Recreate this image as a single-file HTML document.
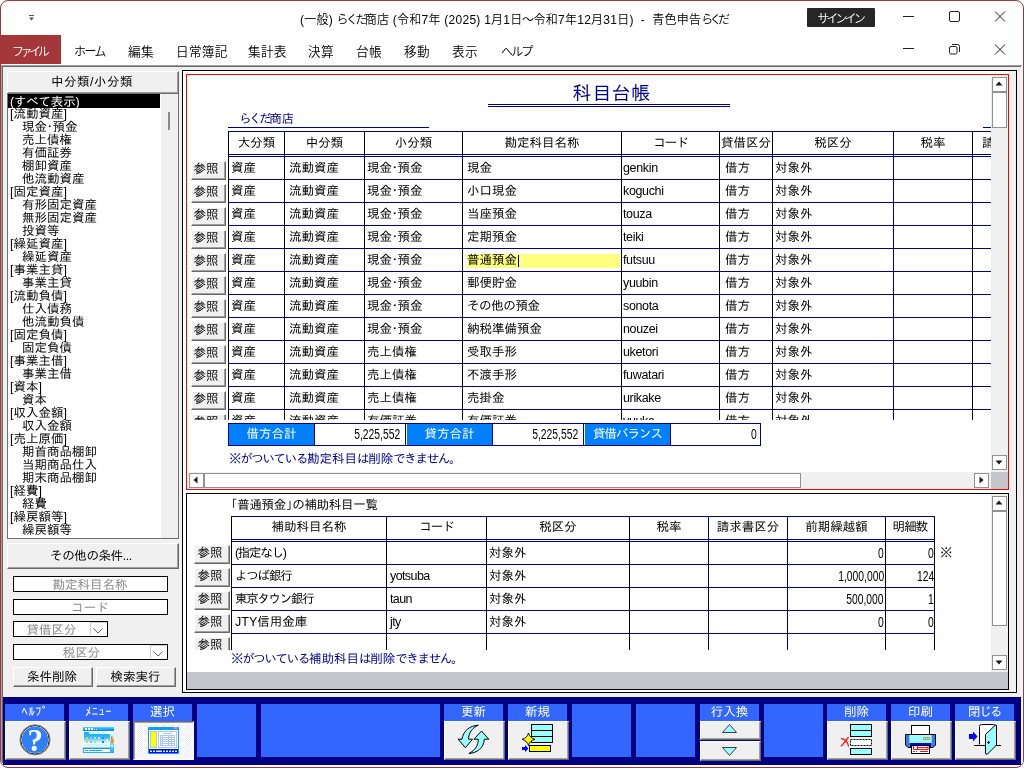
<!DOCTYPE html>
<html lang="ja"><head><meta charset="utf-8"><title>科目台帳 - 青色申告らくだ</title>
<style>
html,body{margin:0;padding:0;background:#fff;}
body{width:1024px;height:768px;position:relative;overflow:hidden;will-change:transform;font-family:"Liberation Sans","IPAGothic",sans-serif;font-size:12px;color:#000;}
body div{position:absolute;box-sizing:content-box;}
.t{white-space:nowrap;line-height:12px;height:12px;font-size:12.5px;}
.u{white-space:nowrap;line-height:16px;height:16px;font-size:12px;font-family:"Liberation Sans","Noto Sans CJK JP",sans-serif;color:#000;font-weight:350;}
.b3{background:#f0f0f0;border-top:1px solid #fff;border-left:1px solid #fff;border-right:1px solid #696969;border-bottom:1px solid #696969;box-shadow:inset -1px -1px 0 #a0a0a0;}
.sb{background:#fff;border:1px solid #919191;}
.nv{color:#000080;}
svg{position:absolute;overflow:visible;}
.clip{overflow:hidden;}
.md{margin:0 -3.5px;}
.k{letter-spacing:-1.35px;}
.num{font-size:14px;line-height:14px;height:14px;transform:scaleX(.74);transform-origin:100% 50%;}
</style></head><body>

<div style="left:0px;top:0px;width:1022px;height:766px;border:1px solid #a4373a;border-radius:8px;background:#fff;"></div>
<svg style="left:28px;top:14px" width="9" height="9"><rect x="1" y="1" width="5" height="1" fill="#555"/><path d="M1 3.500h5l-2.500 3z" fill="#555"/></svg>
<div class="u" style="left:300px;top:12px;letter-spacing:0.25px;">(一般) <span style="letter-spacing:-2.6px">らくだ</span>商店 (令和7年 (2025) 1月1日<span style="margin:0 -0.6px">～</span>令和7年12月31日)&nbsp; -&nbsp; 青色申告<span style="letter-spacing:-3.6px">らくだ</span></div>
<div style="left:807px;top:8px;width:68px;height:19px;background:#262626;border-radius:1px;"></div>
<div class="u" style="left:806px;top:11px;width:68px;text-align:center;color:#fff;letter-spacing:-2.9px;">サインイン</div>
<svg style="left:900px;top:8px" width="112" height="18" fill="none" stroke="#222" stroke-width="1"><path d="M3 8.5h11"/><rect x="49.5" y="3.5" width="10" height="10" rx="1.5"/><path d="M95 3.5l10 10M105 3.5l-10 10"/></svg>
<svg style="left:900px;top:40px" width="112" height="18" fill="none" stroke="#222" stroke-width="1"><path d="M3 8.5h11"/><rect x="49.5" y="6.5" width="7.5" height="7.5" rx="1.5"/><path d="M52 4.5h5.5a2 2 0 0 1 2 2V12"/><path d="M95 4.5l10 10M105 4.5l-10 10"/></svg>
<div style="left:1px;top:35px;width:60px;height:29px;background:#a4373a;"></div>
<div class="u" style="left:12px;top:44px;color:#fff;letter-spacing:-3.4px;">ファイル</div>
<div class="u" style="left:74px;top:44px;letter-spacing:-1.6px;">ホーム</div>
<div class="u" style="left:128px;top:44px;letter-spacing:0.3px;font-size:12.6px;">編集</div>
<div class="u" style="left:176px;top:44px;letter-spacing:0.3px;font-size:12.6px;">日常簿記</div>
<div class="u" style="left:248px;top:44px;letter-spacing:0.3px;font-size:12.6px;">集計表</div>
<div class="u" style="left:308px;top:44px;letter-spacing:0.3px;font-size:12.6px;">決算</div>
<div class="u" style="left:356px;top:44px;letter-spacing:0.3px;font-size:12.6px;">台帳</div>
<div class="u" style="left:404px;top:44px;letter-spacing:0.3px;font-size:12.6px;">移動</div>
<div class="u" style="left:452px;top:44px;letter-spacing:0.3px;font-size:12.6px;">表示</div>
<div class="u" style="left:501px;top:44px;letter-spacing:-1.8px;">ヘルプ</div>
<div style="left:1px;top:65px;width:1021px;height:632px;background:#f0f0f0;"></div>
<div style="left:1px;top:65px;width:1021px;height:1px;background:#a0a0a0"></div>
<div style="left:2px;top:66px;width:1020px;height:1px;background:#696969"></div>
<div style="left:1px;top:65px;width:1px;height:697px;background:#a0a0a0"></div>
<div style="left:2px;top:66px;width:1px;height:697px;background:#696969"></div>
<div style="left:1022px;top:65px;width:1px;height:698px;background:#fff"></div>
<div style="left:1021px;top:66px;width:1px;height:698px;background:#f4f4f4"></div>
<div class="b3" style="left:7px;top:71px;width:170px;height:21px;"></div>
<div class="t" style="left:6px;top:76px;width:172px;text-align:center;letter-spacing:0.5px;">中分類/小分類</div>
<div style="left:7px;top:93px;width:170px;height:444px;border:1px solid #6e6e6e;background:#fff;"></div>
<div style="left:161px;top:94px;width:17px;height:444px;background:#f0f0f0;"></div>
<div style="left:168px;top:112px;width:2px;height:18px;background:#8a8a8a;"></div>
<div style="left:8px;top:94px;width:152px;height:14px;background:#000;"></div>
<div class="t" style="left:10px;top:96px;color:#fff;letter-spacing:-0.2px;">(すべて表示)</div>
<div class="t" style="left:10px;top:108px;">[流動資産]</div>
<div class="t" style="left:22px;top:121px;">現金<span class="md">・</span>預金</div>
<div class="t" style="left:22px;top:134px;">売上債権</div>
<div class="t" style="left:22px;top:147px;">有価証券</div>
<div class="t" style="left:22px;top:160px;">棚卸資産</div>
<div class="t" style="left:22px;top:173px;">他流動資産</div>
<div class="t" style="left:10px;top:186px;">[固定資産]</div>
<div class="t" style="left:22px;top:199px;">有形固定資産</div>
<div class="t" style="left:22px;top:212px;">無形固定資産</div>
<div class="t" style="left:22px;top:225px;">投資等</div>
<div class="t" style="left:10px;top:238px;">[繰延資産]</div>
<div class="t" style="left:22px;top:251px;">繰延資産</div>
<div class="t" style="left:10px;top:264px;">[事業主貸]</div>
<div class="t" style="left:22px;top:277px;">事業主貸</div>
<div class="t" style="left:10px;top:290px;">[流動負債]</div>
<div class="t" style="left:22px;top:303px;">仕入債務</div>
<div class="t" style="left:22px;top:316px;">他流動負債</div>
<div class="t" style="left:10px;top:329px;">[固定負債]</div>
<div class="t" style="left:22px;top:342px;">固定負債</div>
<div class="t" style="left:10px;top:355px;">[事業主借]</div>
<div class="t" style="left:22px;top:368px;">事業主借</div>
<div class="t" style="left:10px;top:381px;">[資本]</div>
<div class="t" style="left:22px;top:394px;">資本</div>
<div class="t" style="left:10px;top:407px;">[収入金額]</div>
<div class="t" style="left:22px;top:420px;">収入金額</div>
<div class="t" style="left:10px;top:433px;">[売上原価]</div>
<div class="t" style="left:22px;top:446px;">期首商品棚卸</div>
<div class="t" style="left:22px;top:459px;">当期商品仕入</div>
<div class="t" style="left:22px;top:472px;">期末商品棚卸</div>
<div class="t" style="left:10px;top:485px;">[経費]</div>
<div class="t" style="left:22px;top:498px;">経費</div>
<div class="t" style="left:10px;top:511px;">[繰戻額等]</div>
<div class="t" style="left:22px;top:524px;">繰戻額等</div>
<div class="b3" style="left:7px;top:543px;width:170px;height:24px;"></div>
<div class="t" style="left:5px;top:550px;width:172px;text-align:center;letter-spacing:-0.4px;">その他の条件...</div>
<div style="left:13px;top:576px;width:153px;height:14px;border:1px solid #000;background:#fff;"></div>
<div class="t" style="left:13px;top:579px;width:154px;text-align:center;color:#8a8a8a;">勘定科目名称</div>
<div style="left:13px;top:599px;width:153px;height:14px;border:1px solid #000;background:#fff;"></div>
<div class="t" style="left:13px;top:602px;width:154px;text-align:center;color:#8a8a8a;">コード</div>
<div style="left:13px;top:621px;width:93px;height:14px;border:1px solid #000;background:#fff;"></div>
<div class="t" style="left:13px;top:624px;width:77px;text-align:center;color:#8a8a8a;">貸借区分</div>
<div style="left:90px;top:622px;width:16px;height:13px;background:#fdfdfd;border-left:1px solid #d0d0d0;border-top:1px solid #d0d0d0;width:15px;height:12px;"></div>
<svg style="left:93px;top:628px" width="11" height="6" fill="none" stroke="#666" stroke-width="1"><path d="M0.5 0.5l4.5 4.5l4.5-4.5"/></svg>
<div style="left:13px;top:644px;width:153px;height:14px;border:1px solid #000;background:#fff;"></div>
<div class="t" style="left:13px;top:647px;width:137px;text-align:center;color:#8a8a8a;">税区分</div>
<div style="left:150px;top:645px;width:16px;height:13px;background:#fdfdfd;border-left:1px solid #d0d0d0;border-top:1px solid #d0d0d0;width:15px;height:12px;"></div>
<svg style="left:153px;top:651px" width="11" height="6" fill="none" stroke="#666" stroke-width="1"><path d="M0.5 0.5l4.5 4.5l4.5-4.5"/></svg>
<div class="b3" style="left:13px;top:667px;width:78px;height:18px;"></div>
<div class="t" style="left:12px;top:671px;width:80px;text-align:center;">条件削除</div>
<div class="b3" style="left:96px;top:667px;width:78px;height:18px;"></div>
<div class="t" style="left:95px;top:671px;width:81px;text-align:center;">検索実行</div>
<div style="left:182px;top:70px;width:833px;height:621px;border:1px solid #000;background:#f0f0f0;"></div>
<div style="left:183px;top:71px;width:826px;height:621px;background:#fff;"></div>
<div style="left:186px;top:74px;width:821px;height:414px;border:1px solid #f00;background:#fff;"></div>
<div style="left:991px;top:75px;width:17px;height:397px;background:#f0f0f0;"></div>
<div class="sb" style="left:992px;top:77px;width:13px;height:13px;"></div><svg style="left:992px;top:77px" width="15" height="15"><path d="M3.5 8.5h7l-3.5-4z" fill="#1a1a1a"/></svg>
<div class="sb" style="left:992px;top:92px;width:13px;height:34px;"></div>
<div class="sb" style="left:992px;top:455px;width:13px;height:13px;"></div><svg style="left:992px;top:455px" width="15" height="15"><path d="M3.5 5.5h7l-3.5 4z" fill="#1a1a1a"/></svg>
<div style="left:187px;top:472px;width:804px;height:17px;background:#f0f0f0;"></div>
<div class="sb" style="left:189px;top:473px;width:13px;height:13px;"></div><svg style="left:189px;top:473px" width="15" height="15"><path d="M8.5 3.5v7l-4-3.5z" fill="#1a1a1a"/></svg>
<div class="sb" style="left:204px;top:473px;width:595px;height:13px;"></div>
<div class="sb" style="left:974px;top:473px;width:13px;height:13px;"></div><svg style="left:974px;top:473px" width="15" height="15"><path d="M5.5 3.5v7l4-3.5z" fill="#1a1a1a"/></svg>
<div style="left:991px;top:472px;width:17px;height:17px;background:#c3c7cb;"></div>
<div class="t" style="left:490px;top:84px;width:243px;text-align:center;font-size:19px;line-height:19px;height:19px;letter-spacing:0.7px;text-indent:0.7px;color:#000090;">科目台帳</div>
<div style="left:488px;top:104px;width:242px;height:1px;background:#000080"></div>
<div style="left:488px;top:106px;width:242px;height:1px;background:#000080"></div>
<div class="t" style="left:239px;top:113px;color:#000090;"><span style="letter-spacing:-2.4px">らくだ</span>商店</div>
<div style="left:228px;top:127px;width:201px;height:1px;background:#000080"></div>
<div style="left:983px;top:127px;width:8px;height:1px;background:#000080"></div>
<div class="clip" style="left:187px;top:75px;width:804px;height:345px;">
<div style="left:41px;top:56px;width:1px;height:300px;background:#000"></div>
<div style="left:97px;top:56px;width:1px;height:300px;background:#000"></div>
<div style="left:177px;top:56px;width:1px;height:300px;background:#000"></div>
<div style="left:275px;top:56px;width:1px;height:300px;background:#000"></div>
<div style="left:434px;top:56px;width:1px;height:300px;background:#000"></div>
<div style="left:532px;top:56px;width:1px;height:300px;background:#000"></div>
<div style="left:585px;top:56px;width:1px;height:300px;background:#000"></div>
<div style="left:706px;top:56px;width:1px;height:300px;background:#000080"></div>
<div style="left:785px;top:56px;width:1px;height:300px;background:#000"></div>
<div style="left:41px;top:56px;width:800px;height:1px;background:#000080"></div>
<div style="left:41px;top:79px;width:800px;height:1px;background:#000080"></div>
<div style="left:41px;top:81px;width:800px;height:1px;background:#000080"></div>
<div style="left:41px;top:104px;width:800px;height:1px;background:#000080"></div>
<div style="left:41px;top:127px;width:800px;height:1px;background:#000080"></div>
<div style="left:41px;top:150px;width:800px;height:1px;background:#000080"></div>
<div style="left:41px;top:173px;width:800px;height:1px;background:#000080"></div>
<div style="left:41px;top:196px;width:800px;height:1px;background:#000080"></div>
<div style="left:41px;top:219px;width:800px;height:1px;background:#000080"></div>
<div style="left:41px;top:242px;width:800px;height:1px;background:#000080"></div>
<div style="left:41px;top:265px;width:800px;height:1px;background:#000080"></div>
<div style="left:41px;top:288px;width:800px;height:1px;background:#000080"></div>
<div style="left:41px;top:311px;width:800px;height:1px;background:#000080"></div>
<div style="left:41px;top:334px;width:800px;height:1px;background:#000080"></div>
<div class="t" style="left:42px;top:62px;width:55px;text-align:center;">大分類</div>
<div class="t" style="left:98px;top:62px;width:79px;text-align:center;">中分類</div>
<div class="t" style="left:178px;top:62px;width:97px;text-align:center;">小分類</div>
<div class="t" style="left:276px;top:62px;width:158px;text-align:center;">勘定科目名称</div>
<div class="t" style="left:435px;top:62px;width:97px;text-align:center;letter-spacing:-1.2px;">コード</div>
<div class="t" style="left:533px;top:62px;width:52px;text-align:center;">貸借区分</div>
<div class="t" style="left:586px;top:62px;width:120px;text-align:center;">税区分</div>
<div class="t" style="left:707px;top:62px;width:78px;text-align:center;">税率</div>
<div class="t" style="left:795px;top:62px;">請求書区分</div>
<div class="b3" style="left:4px;top:86px;width:33px;height:17px;"></div>
<div class="t" style="left:2px;top:88px;width:34px;text-align:center;">参照</div>
<div class="t" style="left:44px;top:87px;">資産</div>
<div class="t" style="left:102px;top:87px;">流動資産</div>
<div class="t" style="left:180px;top:87px;">現金<span class="md">・</span>預金</div>
<div class="t" style="left:280px;top:87px;">現金</div>
<div class="t" style="left:436px;top:87px;letter-spacing:-0.35px;">genkin</div>
<div class="t" style="left:538px;top:87px;">借方</div>
<div class="t" style="left:588px;top:87px;">対象外</div>
<div class="b3" style="left:4px;top:109px;width:33px;height:17px;"></div>
<div class="t" style="left:2px;top:111px;width:34px;text-align:center;">参照</div>
<div class="t" style="left:44px;top:110px;">資産</div>
<div class="t" style="left:102px;top:110px;">流動資産</div>
<div class="t" style="left:180px;top:110px;">現金<span class="md">・</span>預金</div>
<div class="t" style="left:280px;top:110px;">小口現金</div>
<div class="t" style="left:436px;top:110px;letter-spacing:-0.35px;">koguchi</div>
<div class="t" style="left:538px;top:110px;">借方</div>
<div class="t" style="left:588px;top:110px;">対象外</div>
<div class="b3" style="left:4px;top:132px;width:33px;height:17px;"></div>
<div class="t" style="left:2px;top:134px;width:34px;text-align:center;">参照</div>
<div class="t" style="left:44px;top:133px;">資産</div>
<div class="t" style="left:102px;top:133px;">流動資産</div>
<div class="t" style="left:180px;top:133px;">現金<span class="md">・</span>預金</div>
<div class="t" style="left:280px;top:133px;">当座預金</div>
<div class="t" style="left:436px;top:133px;letter-spacing:-0.35px;">touza</div>
<div class="t" style="left:538px;top:133px;">借方</div>
<div class="t" style="left:588px;top:133px;">対象外</div>
<div class="b3" style="left:4px;top:155px;width:33px;height:17px;"></div>
<div class="t" style="left:2px;top:157px;width:34px;text-align:center;">参照</div>
<div class="t" style="left:44px;top:156px;">資産</div>
<div class="t" style="left:102px;top:156px;">流動資産</div>
<div class="t" style="left:180px;top:156px;">現金<span class="md">・</span>預金</div>
<div class="t" style="left:280px;top:156px;">定期預金</div>
<div class="t" style="left:436px;top:156px;letter-spacing:-0.35px;">teiki</div>
<div class="t" style="left:538px;top:156px;">借方</div>
<div class="t" style="left:588px;top:156px;">対象外</div>
<div class="b3" style="left:4px;top:178px;width:33px;height:17px;"></div>
<div class="t" style="left:2px;top:180px;width:34px;text-align:center;">参照</div>
<div style="left:280px;top:179px;width:153px;height:14px;background:#ffff80;"></div>
<div style="left:331px;top:180px;width:1px;height:12px;background:#000080"></div>
<div class="t" style="left:44px;top:179px;">資産</div>
<div class="t" style="left:102px;top:179px;">流動資産</div>
<div class="t" style="left:180px;top:179px;">現金<span class="md">・</span>預金</div>
<div class="t" style="left:280px;top:179px;">普通預金</div>
<div class="t" style="left:436px;top:179px;letter-spacing:-0.35px;">futsuu</div>
<div class="t" style="left:538px;top:179px;">借方</div>
<div class="t" style="left:588px;top:179px;">対象外</div>
<div class="b3" style="left:4px;top:201px;width:33px;height:17px;"></div>
<div class="t" style="left:2px;top:203px;width:34px;text-align:center;">参照</div>
<div class="t" style="left:44px;top:202px;">資産</div>
<div class="t" style="left:102px;top:202px;">流動資産</div>
<div class="t" style="left:180px;top:202px;">現金<span class="md">・</span>預金</div>
<div class="t" style="left:280px;top:202px;">郵便貯金</div>
<div class="t" style="left:436px;top:202px;letter-spacing:-0.35px;">yuubin</div>
<div class="t" style="left:538px;top:202px;">借方</div>
<div class="t" style="left:588px;top:202px;">対象外</div>
<div class="b3" style="left:4px;top:224px;width:33px;height:17px;"></div>
<div class="t" style="left:2px;top:226px;width:34px;text-align:center;">参照</div>
<div class="t" style="left:44px;top:225px;">資産</div>
<div class="t" style="left:102px;top:225px;">流動資産</div>
<div class="t" style="left:180px;top:225px;">現金<span class="md">・</span>預金</div>
<div class="t" style="left:280px;top:225px;letter-spacing:-0.4px;">その他の預金</div>
<div class="t" style="left:436px;top:225px;letter-spacing:-0.35px;">sonota</div>
<div class="t" style="left:538px;top:225px;">借方</div>
<div class="t" style="left:588px;top:225px;">対象外</div>
<div class="b3" style="left:4px;top:247px;width:33px;height:17px;"></div>
<div class="t" style="left:2px;top:249px;width:34px;text-align:center;">参照</div>
<div class="t" style="left:44px;top:248px;">資産</div>
<div class="t" style="left:102px;top:248px;">流動資産</div>
<div class="t" style="left:180px;top:248px;">現金<span class="md">・</span>預金</div>
<div class="t" style="left:280px;top:248px;">納税準備預金</div>
<div class="t" style="left:436px;top:248px;letter-spacing:-0.35px;">nouzei</div>
<div class="t" style="left:538px;top:248px;">借方</div>
<div class="t" style="left:588px;top:248px;">対象外</div>
<div class="b3" style="left:4px;top:270px;width:33px;height:17px;"></div>
<div class="t" style="left:2px;top:272px;width:34px;text-align:center;">参照</div>
<div class="t" style="left:44px;top:271px;">資産</div>
<div class="t" style="left:102px;top:271px;">流動資産</div>
<div class="t" style="left:180px;top:271px;">売上債権</div>
<div class="t" style="left:280px;top:271px;">受取手形</div>
<div class="t" style="left:436px;top:271px;letter-spacing:-0.35px;">uketori</div>
<div class="t" style="left:538px;top:271px;">借方</div>
<div class="t" style="left:588px;top:271px;">対象外</div>
<div class="b3" style="left:4px;top:293px;width:33px;height:17px;"></div>
<div class="t" style="left:2px;top:295px;width:34px;text-align:center;">参照</div>
<div class="t" style="left:44px;top:294px;">資産</div>
<div class="t" style="left:102px;top:294px;">流動資産</div>
<div class="t" style="left:180px;top:294px;">売上債権</div>
<div class="t" style="left:280px;top:294px;">不渡手形</div>
<div class="t" style="left:436px;top:294px;letter-spacing:-0.35px;">fuwatari</div>
<div class="t" style="left:538px;top:294px;">借方</div>
<div class="t" style="left:588px;top:294px;">対象外</div>
<div class="b3" style="left:4px;top:316px;width:33px;height:17px;"></div>
<div class="t" style="left:2px;top:318px;width:34px;text-align:center;">参照</div>
<div class="t" style="left:44px;top:317px;">資産</div>
<div class="t" style="left:102px;top:317px;">流動資産</div>
<div class="t" style="left:180px;top:317px;">売上債権</div>
<div class="t" style="left:280px;top:317px;">売掛金</div>
<div class="t" style="left:436px;top:317px;letter-spacing:-0.35px;">urikake</div>
<div class="t" style="left:538px;top:317px;">借方</div>
<div class="t" style="left:588px;top:317px;">対象外</div>
<div class="b3" style="left:4px;top:339px;width:33px;height:17px;"></div>
<div class="t" style="left:2px;top:341px;width:34px;text-align:center;">参照</div>
<div class="t" style="left:44px;top:340px;">資産</div>
<div class="t" style="left:102px;top:340px;">流動資産</div>
<div class="t" style="left:180px;top:340px;">有価証券</div>
<div class="t" style="left:280px;top:340px;">有価証券</div>
<div class="t" style="left:436px;top:340px;letter-spacing:-0.35px;">yuuka</div>
<div class="t" style="left:538px;top:340px;">借方</div>
<div class="t" style="left:588px;top:340px;">対象外</div>
</div>
<div style="left:228px;top:423px;width:531px;height:21px;border:1px solid #000080;background:#fff;"></div>
<div style="left:229px;top:424px;width:85px;height:21px;background:#0080ff;"></div>
<div class="t" style="left:229px;top:428px;width:85px;text-align:center;color:#fff;">借方合計</div>
<div style="left:314px;top:424px;width:1px;height:21px;background:#000080"></div>
<div style="left:405px;top:424px;width:1px;height:21px;background:#000080"></div>
<div class="t num" style="right:624px;top:427px;">5,225,552</div>
<div style="left:407px;top:424px;width:85px;height:21px;background:#0080ff;"></div>
<div class="t" style="left:407px;top:428px;width:85px;text-align:center;color:#fff;">貸方合計</div>
<div style="left:492px;top:424px;width:1px;height:21px;background:#000080"></div>
<div style="left:583px;top:424px;width:1px;height:21px;background:#000080"></div>
<div class="t num" style="right:446px;top:427px;">5,225,552</div>
<div style="left:585px;top:424px;width:85px;height:21px;background:#0080ff;"></div>
<div class="t" style="left:585px;top:428px;width:85px;text-align:center;color:#fff;letter-spacing:-1px;">貸借バランス</div>
<div style="left:670px;top:424px;width:1px;height:21px;background:#000080"></div>
<div class="t num" style="right:267px;top:427px;">0</div>
<div class="t" style="left:229px;top:453px;color:#000090;"><span class="k">※がついている</span>勘定科目<span class="k">は</span>削除<span class="k">できません。</span></div>
<div style="left:186px;top:493px;width:821px;height:195px;border:1px solid #000;background:#fff;"></div>
<div style="left:187px;top:672px;width:821px;height:17px;background:#c3c7cb;"></div>
<div style="left:991px;top:494px;width:17px;height:178px;background:#f0f0f0;"></div>
<div class="sb" style="left:992px;top:496px;width:13px;height:13px;"></div><svg style="left:992px;top:496px" width="15" height="15"><path d="M3.5 8.5h7l-3.5-4z" fill="#1a1a1a"/></svg>
<div class="sb" style="left:992px;top:511px;width:13px;height:113px;"></div>
<div class="sb" style="left:992px;top:655px;width:13px;height:13px;"></div><svg style="left:992px;top:655px" width="15" height="15"><path d="M3.5 5.5h7l-3.5 4z" fill="#1a1a1a"/></svg>
<div class="t" style="left:225px;top:499px;letter-spacing:-0.3px;">「普通預金<span style="margin-right:-6px">」</span>の補助科目一覧</div>
<div class="clip" style="left:187px;top:494px;width:804px;height:156px;">
<div style="left:44px;top:22px;width:1px;height:200px;background:#000"></div>
<div style="left:199px;top:22px;width:1px;height:200px;background:#000"></div>
<div style="left:299px;top:22px;width:1px;height:200px;background:#000"></div>
<div style="left:442px;top:22px;width:1px;height:200px;background:#000"></div>
<div style="left:521px;top:22px;width:1px;height:200px;background:#000080"></div>
<div style="left:600px;top:22px;width:1px;height:200px;background:#000080"></div>
<div style="left:698px;top:22px;width:1px;height:200px;background:#000"></div>
<div style="left:747px;top:22px;width:1px;height:200px;background:#000"></div>
<div style="left:44px;top:22px;width:704px;height:1px;background:#000080"></div>
<div style="left:44px;top:45px;width:704px;height:1px;background:#000080"></div>
<div style="left:44px;top:47px;width:704px;height:1px;background:#000080"></div>
<div style="left:44px;top:70px;width:704px;height:1px;background:#000080"></div>
<div style="left:44px;top:93px;width:704px;height:1px;background:#000080"></div>
<div style="left:44px;top:116px;width:704px;height:1px;background:#000080"></div>
<div style="left:44px;top:139px;width:704px;height:1px;background:#000080"></div>
<div style="left:44px;top:162px;width:704px;height:1px;background:#000080"></div>
<div class="t" style="left:45px;top:27px;width:154px;text-align:center;">補助科目名称</div>
<div class="t" style="left:200px;top:27px;width:99px;text-align:center;letter-spacing:-1.2px;">コード</div>
<div class="t" style="left:300px;top:27px;width:142px;text-align:center;">税区分</div>
<div class="t" style="left:443px;top:27px;width:78px;text-align:center;">税率</div>
<div class="t" style="left:522px;top:27px;width:78px;text-align:center;">請求書区分</div>
<div class="t" style="left:601px;top:27px;width:97px;text-align:center;">前期繰越額</div>
<div class="t" style="left:699px;top:27px;width:48px;text-align:center;letter-spacing:-0.8px;">明細数</div>
<div class="b3" style="left:7px;top:51px;width:34px;height:17px;"></div>
<div class="t" style="left:6px;top:53px;width:34px;text-align:center;">参照</div>
<div class="t" style="left:48px;top:53px;letter-spacing:-1.3px;">(指定なし)</div>
<div class="t" style="left:203px;top:53px;letter-spacing:-0.6px;"></div>
<div class="t" style="left:302px;top:53px;">対象外</div>
<div class="t num" style="right:107px;top:52px;">0</div>
<div class="t num" style="right:57px;top:52px;">0</div>
<div class="b3" style="left:7px;top:74px;width:34px;height:17px;"></div>
<div class="t" style="left:6px;top:76px;width:34px;text-align:center;">参照</div>
<div class="t" style="left:48px;top:76px;letter-spacing:-1.2px;">よつば銀行</div>
<div class="t" style="left:203px;top:76px;letter-spacing:-0.6px;">yotsuba</div>
<div class="t" style="left:302px;top:76px;">対象外</div>
<div class="t num" style="right:107px;top:75px;">1,000,000</div>
<div class="t num" style="right:57px;top:75px;">124</div>
<div class="b3" style="left:7px;top:97px;width:34px;height:17px;"></div>
<div class="t" style="left:6px;top:99px;width:34px;text-align:center;">参照</div>
<div class="t" style="left:48px;top:99px;letter-spacing:-1.3px;">東京タウン銀行</div>
<div class="t" style="left:203px;top:99px;letter-spacing:-0.6px;">taun</div>
<div class="t" style="left:302px;top:99px;">対象外</div>
<div class="t num" style="right:107px;top:98px;">500,000</div>
<div class="t num" style="right:57px;top:98px;">1</div>
<div class="b3" style="left:7px;top:120px;width:34px;height:17px;"></div>
<div class="t" style="left:6px;top:122px;width:34px;text-align:center;">参照</div>
<div class="t" style="left:48px;top:122px;">JTY信用金庫</div>
<div class="t" style="left:203px;top:122px;letter-spacing:-0.6px;">jty</div>
<div class="t" style="left:302px;top:122px;">対象外</div>
<div class="t num" style="right:107px;top:121px;">0</div>
<div class="t num" style="right:57px;top:121px;">0</div>
<div class="b3" style="left:7px;top:143px;width:34px;height:17px;"></div>
<div class="t" style="left:6px;top:145px;width:34px;text-align:center;">参照</div>
<div class="t" style="left:48px;top:145px;"></div>
<div class="t" style="left:203px;top:145px;letter-spacing:-0.6px;"></div>
<div class="t" style="left:302px;top:145px;"></div>
<div class="t" style="left:753px;top:53px;">※</div>
</div>
<div class="t" style="left:231px;top:653px;color:#000090;"><span class="k">※がついている</span>補助科目<span class="k">は</span>削除<span class="k">できません。</span></div>
<div style="left:3px;top:697px;width:1018px;height:68px;background:#000080;"></div>
<div style="left:5px;top:704px;width:59px;height:17px;background:#3366ff;"></div>
<div class="t" style="left:5px;top:706px;width:59px;text-align:center;color:#fff;letter-spacing:0.7px;text-indent:1px;">ﾍﾙﾌﾟ</div>
<div class="b3" style="left:5px;top:721px;width:59px;height:37px;"></div>

<div style="left:69px;top:704px;width:59px;height:17px;background:#3366ff;"></div>
<div class="t" style="left:69px;top:706px;width:59px;text-align:center;color:#fff;letter-spacing:0.5px;">ﾒﾆｭｰ</div>
<div class="b3" style="left:69px;top:721px;width:59px;height:37px;"></div>

<div style="left:133px;top:704px;width:59px;height:17px;background:#3366ff;"></div>
<div class="t" style="left:133px;top:706px;width:59px;text-align:center;color:#fff;">選択</div>
<div style="left:133px;top:721px;width:59px;height:37px;background:repeating-conic-gradient(#fff 0 25%,#f0f0f0 0 50%) 0 0/2px 2px;border-top:1px solid #696969;border-left:1px solid #696969;border-right:1px solid #fff;border-bottom:1px solid #fff;box-shadow:inset 1px 1px 0 #a0a0a0;"></div>

<div style="left:197px;top:704px;width:59px;height:53px;background:#3366ff;"></div>
<div style="left:261px;top:704px;width:179px;height:53px;background:#3366ff;"></div>
<div style="left:444px;top:704px;width:59px;height:17px;background:#3366ff;"></div>
<div class="t" style="left:444px;top:706px;width:59px;text-align:center;color:#fff;">更新</div>
<div class="b3" style="left:444px;top:721px;width:59px;height:37px;"></div>

<div style="left:508px;top:704px;width:59px;height:17px;background:#3366ff;"></div>
<div class="t" style="left:508px;top:706px;width:59px;text-align:center;color:#fff;">新規</div>
<div class="b3" style="left:508px;top:721px;width:59px;height:37px;"></div>

<div style="left:572px;top:704px;width:59px;height:53px;background:#3366ff;"></div>
<div style="left:636px;top:704px;width:59px;height:53px;background:#3366ff;"></div>
<div style="left:700px;top:704px;width:59px;height:17px;background:#3366ff;"></div>
<div class="t" style="left:700px;top:706px;width:59px;text-align:center;color:#fff;">行入換</div>
<div class="b3" style="left:700px;top:721px;width:59px;height:17px;"></div>
<div class="b3" style="left:700px;top:741px;width:59px;height:18px;"></div>
<div style="left:764px;top:704px;width:59px;height:53px;background:#3366ff;"></div>
<div style="left:827px;top:704px;width:59px;height:17px;background:#3366ff;"></div>
<div class="t" style="left:827px;top:706px;width:59px;text-align:center;color:#fff;">削除</div>
<div class="b3" style="left:827px;top:721px;width:59px;height:37px;"></div>

<div style="left:891px;top:704px;width:59px;height:17px;background:#3366ff;"></div>
<div class="t" style="left:891px;top:706px;width:59px;text-align:center;color:#fff;">印刷</div>
<div class="b3" style="left:891px;top:721px;width:59px;height:37px;"></div>

<div style="left:955px;top:704px;width:59px;height:17px;background:#3366ff;"></div>
<div class="t" style="left:955px;top:706px;width:59px;text-align:center;color:#fff;letter-spacing:-1.5px;">閉じる</div>
<div class="b3" style="left:955px;top:721px;width:59px;height:37px;"></div>

<svg style="left:0;top:0" width="1024" height="768"><circle cx="35" cy="739.8" r="15.1" fill="#fff" stroke="#808080" stroke-width="1"/><circle cx="35" cy="739.8" r="14.2" fill="#fff" stroke="#111" stroke-width="0.9"/><circle cx="35" cy="739.8" r="13.2" fill="#2d7ffa"/><text x="35.2" y="751" text-anchor="middle" style="font-family:'Liberation Serif',serif;font-weight:bold;font-size:31px" fill="#fff">?</text><defs><linearGradient id="g1" x1="0" y1="0" x2="0" y2="1"><stop offset="0" stop-color="#18b2ff"/><stop offset="0.3" stop-color="#30c0ff"/><stop offset="0.62" stop-color="#d0f6ff"/><stop offset="0.8" stop-color="#ffffff"/></linearGradient><linearGradient id="g2" x1="0" y1="0" x2="0" y2="1"><stop offset="0" stop-color="#40e0ff"/><stop offset="1" stop-color="#0078ff"/></linearGradient><linearGradient id="g3" x1="0" y1="0" x2="0" y2="1"><stop offset="0" stop-color="#ffffff"/><stop offset="0.45" stop-color="#9be4ff"/><stop offset="1" stop-color="#18a8ff"/></linearGradient></defs><rect x="83" y="726.5" width="31" height="26.5" fill="#fff"/><rect x="83" y="727" width="31" height="4" fill="url(#g2)"/><rect x="85" y="728" width="2" height="2" fill="#fff"/><rect x="88" y="728" width="2" height="2" fill="#fff"/><rect x="91" y="728" width="2" height="2" fill="#fff"/><rect x="94" y="729" width="1" height="1" fill="#fff"/><rect x="96" y="729" width="1" height="1" fill="#fff"/><rect x="110" y="731" width="4" height="22" fill="url(#g3)"/><rect x="84" y="732" width="5" height="2" fill="#18b2ff"/><rect x="90" y="732" width="5" height="2" fill="#c8f8ff"/><rect x="96" y="732" width="5" height="2" fill="#c8f8ff"/><rect x="102" y="732" width="5" height="2" fill="#c8f8ff"/><rect x="84" y="734" width="26" height="13" fill="url(#g1)"/><rect x="86" y="737" width="2" height="2" fill="#ffcc33"/><rect x="90" y="737" width="2" height="2" fill="#c0a8f8"/><rect x="94" y="737" width="2" height="2" fill="#a8f888"/><rect x="98" y="737" width="2" height="2" fill="#ffd0f0"/><rect x="102" y="737" width="2" height="2" fill="#5878f8"/><rect x="106" y="739" width="2" height="2" fill="#ffff88"/><rect x="86" y="741" width="2" height="2" fill="#ffc428"/><rect x="90" y="741" width="2" height="2" fill="#a8a8f8"/><rect x="94" y="741" width="2" height="2" fill="#88f888"/><rect x="98" y="741" width="2" height="2" fill="#ffd8f8"/><rect x="102" y="741" width="2" height="2" fill="#3868f0"/><rect x="85" y="744" width="24" height="2" fill="#c8fbff"/><rect x="83" y="747.500" width="27" height="1.500" fill="#0aa0ff"/><rect x="83" y="749" width="27" height="4" fill="#18b0ff"/><rect x="84" y="749" width="26" height="3" fill="#fff"/><rect x="85" y="750" width="3" height="1" fill="#18a8ff"/><rect x="89" y="750" width="13" height="1" fill="#18a8ff"/><rect x="111" y="736" width="1.500" height="7" fill="#ff8c00"/><rect x="112" y="739" width="1.500" height="4" fill="#ff8c00"/><rect x="111" y="745" width="2" height="2" fill="#fff"/><rect x="148" y="727" width="31" height="27" rx="1" fill="#0a9cff"/><rect x="174" y="727" width="3" height="2" fill="#ff7fa8"/><rect x="149" y="730" width="29" height="19" fill="#fff"/><rect x="150" y="731" width="7" height="17" fill="#a8c8f0"/><rect x="151" y="732" width="5" height="15" fill="#ffff00"/><rect x="158.500" y="731.500" width="18" height="16" fill="#fff" stroke="#a8c8f0" stroke-width="1"/><rect x="163" y="733" width="9" height="1" fill="#a8c8f0"/><rect x="160" y="735" width="15" height="11" fill="#a8c8f0"/><rect x="161" y="736" width="1" height="1" fill="#fff"/><rect x="163" y="736" width="5" height="1" fill="#fff"/><rect x="169" y="736" width="2" height="1" fill="#fff"/><rect x="172" y="736" width="2" height="1" fill="#fff"/><rect x="161" y="738" width="1" height="1" fill="#fff"/><rect x="163" y="738" width="5" height="1" fill="#fff"/><rect x="169" y="738" width="2" height="1" fill="#fff"/><rect x="172" y="738" width="2" height="1" fill="#fff"/><rect x="161" y="740" width="1" height="1" fill="#fff"/><rect x="163" y="740" width="5" height="1" fill="#fff"/><rect x="169" y="740" width="2" height="1" fill="#fff"/><rect x="172" y="740" width="2" height="1" fill="#fff"/><rect x="161" y="742" width="1" height="1" fill="#fff"/><rect x="163" y="742" width="5" height="1" fill="#fff"/><rect x="169" y="742" width="2" height="1" fill="#fff"/><rect x="172" y="742" width="2" height="1" fill="#fff"/><rect x="161" y="744" width="1" height="1" fill="#fff"/><rect x="163" y="744" width="5" height="1" fill="#fff"/><rect x="169" y="744" width="2" height="1" fill="#fff"/><rect x="172" y="744" width="2" height="1" fill="#fff"/><rect x="149" y="749" width="29" height="4" fill="#0000ff"/><rect x="150" y="750.500" width="2" height="1.500" fill="#ccffee"/><rect x="153" y="750.500" width="2" height="1.500" fill="#ccffee"/><rect x="163" y="750.500" width="2" height="1.500" fill="#ccffee"/><rect x="166" y="750.500" width="2" height="1.500" fill="#ccffee"/><rect x="169" y="750.500" width="2" height="1.500" fill="#ccffee"/><rect x="172" y="750.500" width="2" height="1.500" fill="#ccffee"/><rect x="175" y="750.500" width="2" height="1.500" fill="#ccffee"/><rect x="156" y="750.500" width="6" height="1.500" fill="#ccffee"/><path d="M478.25 725.2C470 725.5 463 731 462 739.2L458.1 739.2L465.4 747.7L472.6 739.2L468.6 739.2C468.500 733 472 728 478.25 725.2Z" fill="#99ffff" stroke="#000" stroke-width="1" stroke-linejoin="miter"/><path d="M468.9 753.5C477 753 484 748 484.3 739.2L488.8 739.2L481.5 731L474 739.2L478.25 739.2C478.500 745 475 750.500 468.9 753.5Z" fill="#99ffff" stroke="#000" stroke-width="1" stroke-linejoin="miter"/><rect x="531.5" y="724.5" width="21" height="6" fill="#99ffff" stroke="#000"/><rect x="531.5" y="730.5" width="21" height="6" fill="#99ffff" stroke="#000"/><rect x="531.5" y="736.5" width="21" height="6" fill="#99ffff" stroke="#000"/><rect x="529.500" y="745.500" width="21" height="6" fill="#ffff00" stroke="#000"/><path d="M528.500 733q1.200 5 6.500 6.300q-5.300 1.300-6.500 6.300q-1.200-5-6.500-6.300q5.300-1.300 6.500-6.300z" fill="#ffff00" stroke="#111" stroke-width="1"/><path d="M522 747h3v-2l3.500 3.500l-3.500 3.500v-2h-3z" fill="#0000ff"/><path d="M722.500 732.500l7-8l7 8z" fill="#99ffff" stroke="#404040" stroke-width="1"/><path d="M722.500 747.500l7 8l7-8z" fill="#99ffff" stroke="#404040" stroke-width="1"/><rect x="850.5" y="724.5" width="21" height="6" fill="#99ffff" stroke="#000"/><rect x="850.5" y="730.5" width="21" height="6" fill="#99ffff" stroke="#000"/><rect x="850.5" y="748.5" width="21" height="6" fill="#99ffff" stroke="#000"/><rect x="850.5" y="739.5" width="21" height="6" fill="#fff" stroke="#000" stroke-dasharray="2 1"/><path d="M841 738.300C845 739 848 742 848.500 746.500M848.500 737.200C846.500 740 843.500 744 841 746.200" fill="none" stroke="#ff1010" stroke-width="1.3"/><rect x="911.500" y="725.500" width="18" height="9" fill="#fff" stroke="#000"/><path d="M905.500 734.500h30v10.500l-2.500 2.500h-25l-2.500-2.500z" fill="#3080f0" stroke="#000"/><rect x="909.500" y="735" width="22" height="8" fill="#fff"/><rect x="910" y="735" width="21" height="8" fill="#99ffff"/><rect x="923" y="737" width="7" height="3" fill="#a0a098"/><rect x="924" y="738" width="1" height="1" fill="#ff0"/><rect x="926" y="738" width="1" height="1" fill="#ff0"/><rect x="928" y="738" width="1" height="1" fill="#ff0"/><rect x="910" y="743" width="21" height="4" fill="#0000e0"/><rect x="911.500" y="745.500" width="18" height="8" fill="#fff" stroke="#000"/><path d="M913.500 746v3.500h14.500v-3.500M917.500 746v3.500M917.500 747.500h10.500M913 751.500h2M916 751.500h1M920 751.500h8" stroke="#ff1010" stroke-width="1" fill="none"/><path d="M979.500 744.500v-18q0-2 2-2h12q2 0 2 2v18" fill="#fff" stroke="#000"/><path d="M974 745.500h27" stroke="#000"/><path d="M985.500 734.500l10-9.500q1-0.500 1 1v19l-9 9q-2 1-2-1z" fill="#99ffff" stroke="#000" stroke-linejoin="round"/><path d="M988.500 741v3M987 742.500h3" stroke="#0000ff"/><path d="M969 734h4v-2.500l4.500 5l-4.500 5v-2.500h-4z" fill="#0000ff"/></svg>
</body></html>
